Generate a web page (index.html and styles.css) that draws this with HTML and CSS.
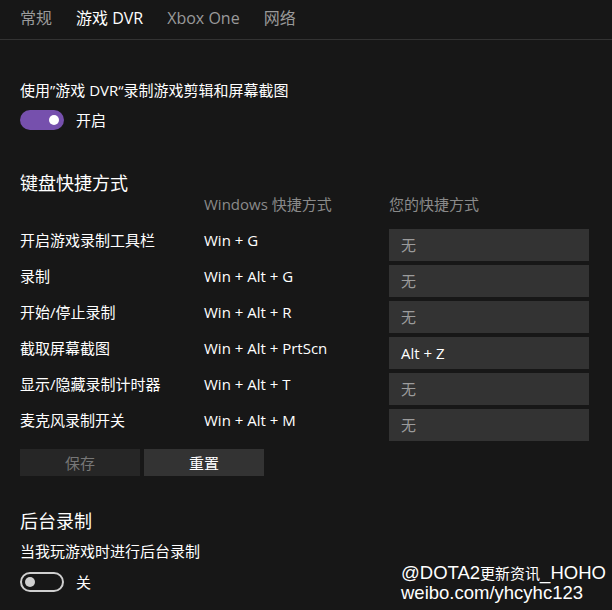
FILE: index.html
```html
<!DOCTYPE html>
<html lang="zh-CN">
<head>
<meta charset="utf-8">
<link rel="stylesheet" href="styles.css">
</head>
<body>
<nav class="tabs">
  <span class="tab">常规</span>
  <span class="tab active">游戏 DVR</span>
  <span class="tab">Xbox One</span>
  <span class="tab">网络</span>
</nav>
<main class="content">
  <p class="label first">使用”游戏 DVR“录制游戏剪辑和屏幕截图</p>
  <div class="toggle-row">
    <span class="toggle on"><span class="knob"></span></span>
    <span class="toggle-text">开启</span>
  </div>

  <h2 class="heading kb">键盘快捷方式</h2>
  <div class="shortcuts">
    <span></span>
    <span class="colhead">Windows 快捷方式</span>
    <span class="colhead">您的快捷方式</span>

    <span class="name">开启游戏录制工具栏</span>
    <span class="keys">Win + G</span>
    <span class="box">无</span>

    <span class="name">录制</span>
    <span class="keys">Win + Alt + G</span>
    <span class="box">无</span>

    <span class="name">开始/停止录制</span>
    <span class="keys">Win + Alt + R</span>
    <span class="box">无</span>

    <span class="name">截取屏幕截图</span>
    <span class="keys">Win + Alt + PrtScn</span>
    <span class="box set">Alt + Z</span>

    <span class="name">显示/隐藏录制计时器</span>
    <span class="keys">Win + Alt + T</span>
    <span class="box">无</span>

    <span class="name">麦克风录制开关</span>
    <span class="keys">Win + Alt + M</span>
    <span class="box">无</span>
  </div>
  <div class="buttons">
    <button class="btn disabled">保存</button>
    <button class="btn">重置</button>
  </div>

  <h2 class="heading bg">后台录制</h2>
  <p class="label sub">当我玩游戏时进行后台录制</p>
  <div class="toggle-row off-row">
    <span class="toggle off"><span class="knob"></span></span>
    <span class="toggle-text">关</span>
  </div>
</main>
<div class="watermark">@DOTA2<span class="cjk">更新资讯</span>_HOHO<br>weibo.com/yhcyhc123</div>
</body>
</html>
```
FILE: styles.css
```css
html, body {
  margin: 0;
  padding: 0;
  background: #171717;
  color: #ffffff;
  font-family: "Open Sans", "Noto Sans CJK SC", sans-serif;
  height: 610px;
  overflow: hidden;
}
.tabs {
  height: 40px;
  box-sizing: border-box;
  padding: 0 0 4px 20px;
  display: flex;
  align-items: center;
  gap: 24px;
  border-bottom: 1px solid #333333;
  font-size: 16px;
}
.tab { color: #9a9a9a; line-height: 20px; }
.tab.active { color: #ffffff; }
.content { padding: 0 20px; }
.label {
  margin: 0;
  font-size: 15px;
  line-height: 20px;
}
.label.first { margin-top: 40px; }
.toggle-row {
  display: flex;
  align-items: center;
  gap: 12px;
  margin-top: 10px;
  height: 20px;
}
.toggle {
  width: 44px;
  height: 20px;
  box-sizing: border-box;
  border-radius: 10px;
  display: flex;
  align-items: center;
}
.toggle .knob {
  width: 10px;
  height: 10px;
  border-radius: 50%;
}
.toggle.on {
  background: #7650ad;
  justify-content: flex-end;
  padding-right: 5px;
}
.toggle.on .knob { background: #ffffff; }
.toggle.off {
  border: 2px solid #cfcfcf;
  justify-content: flex-start;
  padding-left: 3px;
}
.toggle.off .knob { background: #cfcfcf; }
.toggle-text { font-size: 15px; line-height: 20px; }
.heading {
  margin: 0;
  font-size: 18px;
  font-weight: normal;
  line-height: 22px;
}
.heading.kb { margin-top: 42px; }
.shortcuts {
  display: grid;
  grid-template-columns: 184px 185px 200px;
  grid-template-rows: 31px;
  grid-auto-rows: 32px;
  row-gap: 4px;
  align-items: start;
}
.colhead {
  color: #8a8a8a;
  font-size: 15px;
  line-height: 20px;
}
.name, .keys {
  font-size: 15px;
  line-height: 22px;
}
.box {
  background: #333333;
  height: 32px;
  line-height: 32px;
  padding-left: 12px;
  font-size: 15px;
  color: #9c9c9c;
}
.box.set { color: #ffffff; }
.buttons {
  display: flex;
  gap: 4px;
  margin-top: 8px;
}
.btn {
  width: 120px;
  height: 27px;
  border: none;
  padding: 0;
  font-family: inherit;
  font-size: 15px;
  background: #333333;
  color: #ffffff;
}
.btn.disabled { background: #262626; color: #777777; }
.heading.bg { margin-top: 34px; }
.label.sub { margin-top: 9px; }
.off-row { margin-top: 11px; }
.watermark {
  position: absolute;
  left: 401px;
  top: 563px;
  white-space: nowrap;
  font-family: "Liberation Sans", "Noto Sans CJK SC", sans-serif;
  font-size: 18.5px;
  line-height: 19px;
  color: #ffffff;
}
.watermark .cjk { font-size: 15px; }
```
